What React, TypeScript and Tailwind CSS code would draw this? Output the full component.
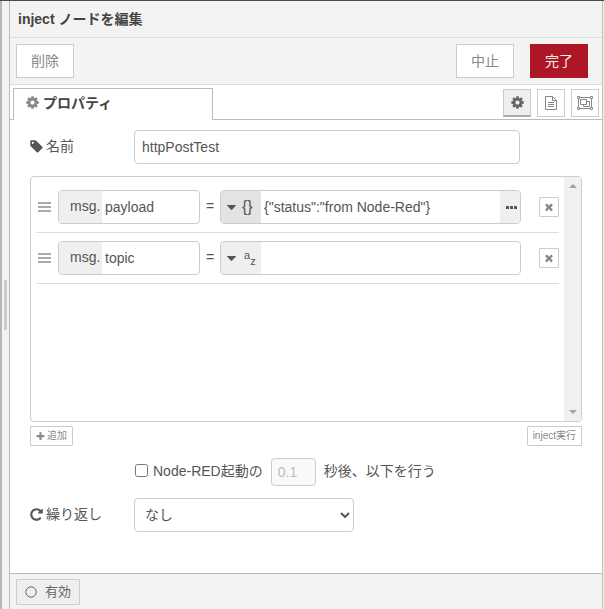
import { useState } from "react";
import type { ReactNode } from "react";

const ICONS = {
  cog: "M1152 896q0-106-75-181t-181-75-181 75-75 181 75 181 181 75 181-75 75-181zm512-109v222q0 12-8 23t-20 13l-185 28q-19 54-39 91 35 50 107 138 10 12 10 25t-9 23q-27 37-99 108t-94 71q-12 0-26-9l-138-108q-44 23-91 38-16 136-29 186-7 28-36 28h-222q-14 0-24.5-8.5t-11.5-21.5l-28-184q-49-16-90-37l-141 107q-10 9-25 9-14 0-25-11-126-114-165-168-7-10-7-23 0-12 8-23 15-21 51-66.5t54-70.5q-27-50-41-99l-183-27q-13-2-21-12.5t-8-23.5v-222q0-12 8-23t19-13l186-28q14-46 39-92-40-57-107-138-10-12-10-24 0-10 9-23 26-36 98.5-107.5t94.5-71.5q13 0 26 10l138 107q44-23 91-38 16-136 29-186 7-28 36-28h222q14 0 24.5 8.5t11.5 21.5l28 184q49 16 90 37l142-107q9-9 24-9 13 0 25 10 129 119 165 170 7 8 7 22 0 12-8 23-15 21-51 66.5t-54 70.5q26 50 41 98l183 28q13 2 21 12.5t8 23.5z",
  tag: "M576 448q0-53-37.5-90.5t-90.5-37.5-90.5 37.5-37.5 90.5 37.5 90.5 90.5 37.5 90.5-37.5 37.5-90.5zm1067 576q0 53-37 90l-491 492q-39 37-91 37-53 0-90-37l-715-716q-38-37-64.5-101t-26.5-117v-416q0-52 38-90t90-38h416q53 0 117 26.5t102 64.5l715 714q37 39 37 91z",
  plus: "M1600 736v192q0 40-28 68t-68 28h-416v416q0 40-28 68t-68 28h-192q-40 0-68-28t-28-68v-416h-416q-40 0-68-28t-28-68v-192q0-40 28-68t68-28h416v-416q0-40 28-68t68-28h192q40 0 68 28t28 68v416h416q40 0 68 28t28 68z",
  remove: "M1490 1322q0 40-28 68l-136 136q-28 28-68 28t-68-28l-294-294-294 294q-28 28-68 28t-68-28l-136-136q-28-28-28-68t28-68l294-294-294-294q-28-28-28-68t28-68l136-136q28-28 68-28t68 28l294 294 294-294q28-28 68-28t68 28l136 136q28 28 28 68t-28 68l-294 294 294 294q28 28 28 68z",
  repeat: "M1664 256v448q0 26-19 45t-45 19h-448q-42 0-59-40-17-39 14-69l138-138q-148-137-349-137-104 0-198.5 40.5t-163.5 109.5-109.5 163.5-40.5 198.5 40.5 198.5 109.5 163.5 163.5 109.5 198.5 40.5q119 0 225-52t179-147q7-10 23-12 15 0 25 9l137 138q9 8 9.5 20.5t-7.5 22.5q-109 132-264 204.5t-327 72.5q-156 0-298-61t-245-164-164-245-61-298 61-298 164-245 245-164 298-61q147 0 284.5 55.5t244.5 156.5l130-129q29-31 70-14 39 17 39 59z",
};

function Icon({ name, className }: { name: keyof typeof ICONS; className: string }) {
  return (
    <svg viewBox="100 100 1592 1592" fill="currentColor" className={`shrink-0 ${className}`} aria-hidden="true">
      <path d={ICONS[name]} />
    </svg>
  );
}

function FileIcon() {
  return (
    <svg viewBox="0 0 12 14" fill="none" stroke="currentColor" className="h-[14px] w-3" aria-hidden="true">
      <path d="M.5 .5h7l4 4v9h-11zM7.5 .5v4h4M3 6.5h6M3 8.5h6M3 10.5h6" />
    </svg>
  );
}

function GroupIcon() {
  return (
    <svg viewBox="0 0 16 14" fill="none" stroke="currentColor" className="h-[14px] w-4" aria-hidden="true">
      <path d="M3 1.5h10M3 12.5h10M1.5 3v8M14.5 3v8" />
      <path d="M.5 .5h2v2h-2zM13.5 .5h2v2h-2zM.5 11.5h2v2h-2zM13.5 11.5h2v2h-2z" />
      <path d="M3.5 3.5h6v5h-6zM9.5 5.5h3v5h-6v-2" />
    </svg>
  );
}

function ToolButton({ label, active, children }: { label: string; active?: boolean; children: ReactNode }) {
  return (
    <button
      aria-label={label}
      className={
        active
          ? "flex size-7 items-center justify-center border border-b-2 border-[#ccc] border-b-[#aaa] bg-[#efefef] text-[#666]"
          : "flex size-7 items-center justify-center border border-[#ccc] bg-white text-[#888]"
      }
    >
      {children}
    </button>
  );
}

const PROPS = [
  { name: "payload", type: "json", value: '{"status":"from Node-Red"}' },
  { name: "topic", type: "str", value: "" },
];

function PropRow({ name, type, value }: { name: string; type: string; value: string }) {
  const isJson = type === "json";
  return (
    <li className="flex items-center border-b border-[#ddd] py-2">
      <span className="ml-0.5 flex w-[13px] flex-col gap-0.5">
        <i className="h-0.5 bg-[#aaa]" />
        <i className="h-0.5 bg-[#aaa]" />
        <i className="h-0.5 bg-[#aaa]" />
      </span>
      <div className="ml-[7px] flex h-[34px] w-[142px] overflow-hidden rounded border border-[#ccc] bg-white">
        <span className="w-[43px] shrink-0 bg-[#efefef] pl-[11px] leading-[30px]">msg.</span>
        <input aria-label={`msg.${name}`} defaultValue={name} className="w-full min-w-0 px-[3px] outline-none" />
      </div>
      <span className="w-5 pb-0.5 text-center">=</span>
      <div className="flex h-[34px] min-w-0 flex-1 overflow-hidden rounded border border-[#ccc] bg-white">
        <button
          aria-label={`${name} の型`}
          className={
            isJson
              ? "flex w-10 shrink-0 items-center gap-1.5 bg-[#e3e3e3] pl-1.5"
              : "flex w-10 shrink-0 items-center gap-1.5 bg-[#efefef] pl-1.5"
          }
        >
          <svg viewBox="0 0 9 5" fill="currentColor" className="h-[5px] w-[9px] shrink-0" aria-hidden="true">
            <path d="M.5 0h8q.6.2.3.8l-3.6 3.8q-.7.6-1.4 0l-3.6-3.8q-.3-.6.3-.8z" />
          </svg>
          {isJson ? (
            <span className="text-base leading-5">{"{}"}</span>
          ) : (
            <span className="flex pl-0.5 text-[11px] leading-3">
              <span className="pb-1.5">a</span>
              <span className="pt-1.5">z</span>
            </span>
          )}
        </button>
        <input aria-label={`${name} の値`} defaultValue={value} className="w-full min-w-0 px-[3px] outline-none" />
        {isJson && (
          <button aria-label="展開" className="flex w-5 shrink-0 items-center justify-center bg-[#efefef] pl-0.5">
            <svg viewBox="0 0 11 3" fill="currentColor" className="h-[3px] w-[11px]" aria-hidden="true">
              <rect width="3" height="3" rx=".6" />
              <rect x="4" width="3" height="3" rx=".6" />
              <rect x="8" width="3" height="3" rx=".6" />
            </svg>
          </button>
        )}
      </div>
      <button
        aria-label={`${name} を削除`}
        className="ml-[18px] flex size-5 items-center justify-center rounded-[1px] border border-[#ccc] text-[#888]"
      >
        <Icon name="remove" className="size-[10px]" />
      </button>
    </li>
  );
}

export default function App() {
  const [once, setOnce] = useState(false);

  return (
    <div className="flex min-h-screen border-t border-[#4d4a4d] bg-[#f3f3f3] font-['Liberation_Sans','Noto_Sans_CJK_JP',sans-serif] text-sm leading-5 text-[#555]">
      {/* Workspace edge and drag handle */}
      <div className="w-0.5 shrink-0 bg-[#b8b8b8]" />
      <div className="flex w-[7px] shrink-0 items-center justify-center">
        <div className="h-[50px] w-[3px] bg-[#ccc]" />
      </div>

      <main className="mr-px flex min-w-0 flex-1 flex-col border-x border-[#bbb] bg-white">
        <h1 className="h-[37px] border-b border-[#ddd] bg-[#f3f3f3] pl-2 font-bold leading-9 text-[#444]">
          inject ノードを編集
        </h1>

        <div className="flex h-[47px] items-center border-b border-[#ddd] bg-[#f3f3f3] pl-1.5 pr-[14px]">
          <button className="h-[34px] w-[58px] border border-[#ccc] bg-white text-[#888]">削除</button>
          <button className="ml-auto h-[34px] w-[58px] border border-[#ccc] bg-white text-[#888]">中止</button>
          <button className="ml-4 h-[34px] w-[58px] bg-[#ad1625] text-[#eee]">完了</button>
        </div>

        {/* Tab bar, the active tab covers the rule beneath it */}
        <div className="flex h-[35px] items-stretch pt-[3px]">
          <div className="w-[3px] border-b border-[#bbb]" />
          <button className="flex w-[200px] items-center gap-1 border border-b-0 border-[#bbb] pb-1 pl-3 font-bold text-[#444]">
            <Icon name="cog" className="size-[13px] text-[#888]" />
            プロパティ
          </button>
          <div className="flex flex-1 items-center justify-end gap-1.5 border-b border-[#bbb] pb-0.5 pr-[3px]">
            <ToolButton label="プロパティ" active>
              <Icon name="cog" className="size-[13px]" />
            </ToolButton>
            <ToolButton label="説明">
              <FileIcon />
            </ToolButton>
            <ToolButton label="外観">
              <GroupIcon />
            </ToolButton>
          </div>
        </div>

        <form className="flex-1 px-5 pb-10 pt-2.5" onSubmit={(e) => e.preventDefault()}>
          <div className="flex items-center">
            <label htmlFor="node-name" className="flex w-[104px] items-center gap-[3px] pb-0.5">
              <Icon name="tag" className="size-[13px]" />
              名前
            </label>
            <input
              id="node-name"
              defaultValue="httpPostTest"
              className="h-[34px] w-[70%] rounded border border-[#ccc] px-[7px] outline-none"
            />
          </div>

          <div className="mt-3 flex h-[246px] overflow-hidden rounded border border-[#ccc]">
            <ul className="min-w-0 flex-1 px-[5px] pt-[5px]">
              {PROPS.map((p) => (
                <PropRow key={p.name} {...p} />
              ))}
            </ul>
            {/* Scrollbar track */}
            <div className="flex w-[17px] flex-col items-center justify-between bg-[#f1f1f1] py-[7px] text-[#a3a3a3]">
              <svg viewBox="0 0 8 4" fill="currentColor" className="h-1 w-2" aria-hidden="true">
                <path d="M0 4l4-4 4 4z" />
              </svg>
              <svg viewBox="0 0 8 4" fill="currentColor" className="h-1 w-2" aria-hidden="true">
                <path d="M0 0l4 4 4-4z" />
              </svg>
            </div>
          </div>

          <div className="mt-1 flex justify-between text-[10px] leading-[18px] text-[#888]">
            <button className="flex h-5 items-center gap-0.5 rounded-[1px] border border-[#ccc] px-[5px]">
              <Icon name="plus" className="size-[9px]" />
              追加
            </button>
            <button className="h-5 rounded-[1px] border border-[#ccc] px-[5px]">inject実行</button>
          </div>

          <div className="mt-3 flex items-center pl-[105px]">
            <input
              id="once"
              type="checkbox"
              checked={once}
              onChange={(e) => setOnce(e.target.checked)}
              className="mb-1 size-[13px]"
            />
            <label htmlFor="once" className="ml-[5px] pb-0.5">Node-RED起動の</label>
            <input
              aria-label="秒"
              defaultValue="0.1"
              disabled={!once}
              className="mx-2 h-7 w-[45px] rounded border border-[#ccc] px-1.5 disabled:bg-[#f9f9f9] disabled:text-[#bbb]"
            />
            <span className="pb-0.5">秒後、以下を行う</span>
          </div>

          <div className="mt-3 flex items-center">
            <label htmlFor="repeat" className="flex w-[104px] items-center gap-[3px] pb-0.5">
              <Icon name="repeat" className="size-[13px]" />
              繰り返し
            </label>
            <div className="relative w-[220px]">
              <select id="repeat" className="h-[34px] w-full appearance-none rounded border border-[#ccc] bg-white px-2.5">
                <option>なし</option>
                <option>指定した時間間隔</option>
                <option>指定した日時</option>
              </select>
              <svg
                viewBox="0 0 10 6"
                fill="none"
                stroke="currentColor"
                strokeWidth="2"
                className="pointer-events-none absolute right-1 top-[14px] h-1.5 w-2.5"
                aria-hidden="true"
              >
                <path d="M1 1l4 4 4-4" />
              </svg>
            </div>
          </div>
        </form>

        <footer className="flex h-9 items-center border-t border-[#bbb] bg-[#f3f3f3] pl-1.5">
          <button className="flex h-[26px] w-16 items-center gap-2 rounded-[1px] border border-[#ccc] bg-[#efefef] pl-2 text-[13px] text-[#666]">
            <svg viewBox="0 0 12 12" fill="none" stroke="currentColor" className="size-3" aria-hidden="true">
              <circle cx="6" cy="6" r="5.2" />
            </svg>
            有効
          </button>
        </footer>
      </main>
    </div>
  );
}
